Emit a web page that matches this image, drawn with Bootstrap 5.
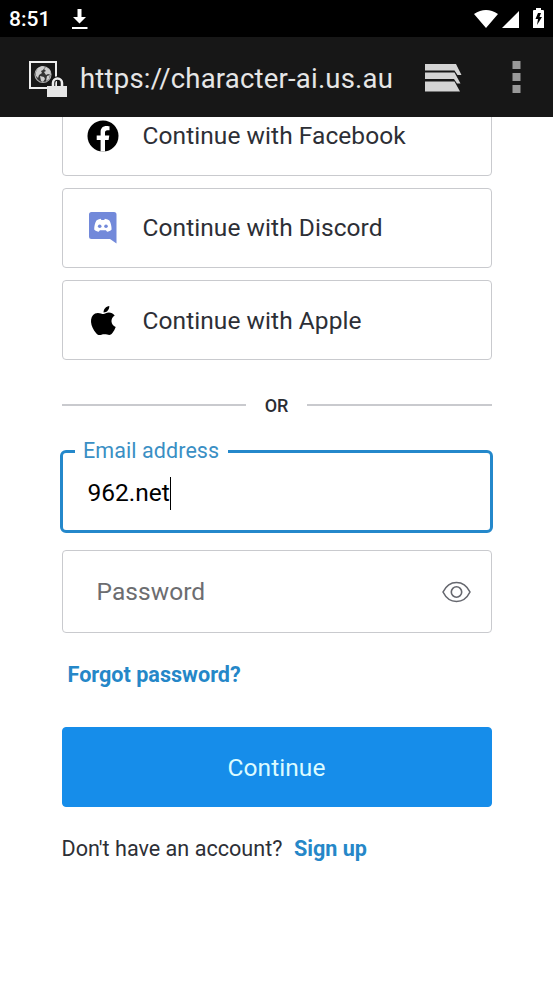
<!DOCTYPE html>
<html lang="en">
<head>
<meta charset="utf-8">
<meta name="viewport" content="width=device-width, initial-scale=1">
<title>Log in</title>
<link href="https://cdn.jsdelivr.net/npm/bootstrap@5.3.0/dist/css/bootstrap.min.css" rel="stylesheet">
<style>
  body { font-family: Roboto, "Liberation Sans", sans-serif; height: 984px; background: #fff; color: #2d2f36; }
  svg { display: block; flex: none; }
  .status-bar { height: 37px; background: #000; color: #fff; padding: 0 8px 0 9px; }
  .clock { font-size: 21px; font-weight: 500; line-height: 37px; width: 61px; padding-top: 2px; }
  .browser-bar { height: 80px; background: #171717; color: #e6e6e6; padding: 0 32px 0 27px; }
  .address { font-size: 27.5px; line-height: 32px; margin-left: 12px; padding-top: 3px; letter-spacing: .2px; }
  .overview { margin-top: 2px; }
  .menu-dots { margin-left: 50px; }
  .login { width: 430px; margin-left: 61.5px; }
  .providers { margin-top: -21.5px; gap: 12.3px; }
  .provider { --bs-btn-border-color: #c9cace; --bs-btn-color: #2d2f36; height: 80px; border-width: 1.5px; border-radius: 4px; padding: 2px 24px 0; font-size: 24.5px; letter-spacing: .06px; }
  .provider svg { margin: -1px 22.5px 0 .5px; }
  .divider { margin-top: 33px; height: 24px; gap: 19px; font-size: 18px; font-weight: 500; color: #2b2d33; }
  .rule { height: 1.5px; background: #c9cace; }
  .field { border: 1.5px solid #c9cace; border-radius: 4px; height: 83px; }
  .field-active { border: 3px solid #2488cb; border-radius: 6px; margin: 33px -1.5px 0; padding: 4px 25px 0 24.5px; font-size: 24.5px; color: #000; }
  .field-label { left: 12px; top: -16px; padding: 0 9px 0 8px; font-size: 21.5px; line-height: 28px; letter-spacing: .08px; color: #3a8fc4; background: #fff; }
  .caret { width: 1px; height: 33px; background: #000; }
  .field-password { margin-top: 17px; padding: 0 20px 0 34px; }
  .field-password input { font-size: 24.5px; letter-spacing: .06px; padding-top: 2px !important; }
  .field-password input::placeholder { color: #6c6d70; opacity: 1; }
  .accent { color: #2587c8; font-weight: 700; text-decoration: none; }
  .forgot { font-size: 21.6px; line-height: 30px; margin: 27px 0 0 6px; }
  .submit { --bs-btn-bg: #168dea; --bs-btn-border-color: #168dea; --bs-btn-color: #dcfbff; height: 80px; margin-top: 37px; border-radius: 4px; padding-top: 8px; font-size: 24.5px; letter-spacing: .06px; }
  .signup { font-size: 21.6px; line-height: 30px; margin-top: 27px; gap: 11.5px; }
</style>
</head>
<body class="overflow-hidden">
<header>
  <div class="status-bar d-flex align-items-center">
    <span class="clock">8:51</span>
    <svg width="18" height="22" viewBox="0 0 18 22" fill="#fff"><path d="M7.500 1h4v8h4.500L9.500 15.500 3 9h4.500zM2 19h15.500v2H2z"/></svg>
    <svg class="ms-auto" width="71" height="22" viewBox="0 0 71 22" fill="#fff"><path d="M0 6Q12 -2 24 6L12 20zM45 3v17H28zM60 2h2V0h5v2h2q1 0 1 1v17H59V3q0-1 1-1z"/><path fill="#000" d="M64 5h3l-1.500 4h2.500l-5 8 1-6h-2.500z"/></svg>
  </div>
  <nav class="browser-bar d-flex align-items-center" aria-label="Browser">
    <svg width="41" height="40" viewBox="27 59 41 40"><path fill="#171717" stroke="#eee" stroke-width="2" d="M30 64h26v26H30z"/><circle cx="43" cy="76.500" r="8" fill="#333" stroke="#aaa" stroke-width="1.200"/><path fill="#ccc" d="M36 74l2-4 4-2 3 1-2 3-2 1 1 2-3 2-1 3-2-2zm10-5l4 3 1 5-3-1-2 1-2-3 2-1-2-2zm-6 9l4 1 1 2-2 3-2-1zm7 0l3-1-1 4-3 2z"/><path fill="none" stroke="#171717" stroke-width="4.500" d="M53 90v-5a4.500 4.500 0 0 1 9 0v5"/><path fill="none" stroke="#eee" stroke-width="2.500" d="M53 90v-5a4.500 4.500 0 0 1 9 0v5"/><path fill="#e6e6e6" d="M47 88h20v11H47z"/></svg>
    <span class="address">https://character-ai.us.au</span>
    <svg class="overview ms-auto" width="37" height="28" viewBox="0 0 37 28" fill="#d4d4d4"><path d="M0 0h31l5.500 11h-4L29.500 6.500H0zM0 8.500h29.500l6 11h-3.500L29 15H0zM0 17.500h29.500l5.500 10H0z"/></svg>
    <svg class="menu-dots" width="9" height="32" viewBox="0 0 9 32" fill="#999"><path d="M.5 0h8v8h-8zM.5 12h8v8h-8zM.5 24h8v8h-8z"/></svg>
  </nav>
</header>
<main class="overflow-hidden">
  <form class="login">
    <div class="providers d-flex flex-column">
      <button type="button" class="provider btn d-flex align-items-center">
        <svg width="33" height="32" viewBox="0 0 33 32"><circle cx="16" cy="16" r="15.500"/><path fill="#fff" d="M13.600 31.500V20H9.700v-4.500h3.900V12c0-3.900 2.300-6 5.900-6 1.700 0 3 .3 3 .3v3.900h-2c-1.900 0-2.500 1.200-2.500 2.400v2.900h4.300l-.7 4.500H18v11.500z"/></svg>
        Continue with Facebook
      </button>
      <button type="button" class="provider btn d-flex align-items-center">
        <svg width="33" height="32" viewBox="0 0 33 32"><path fill="#7289da" d="M4.500 0h22.500q2.500 0 2.500 2.500v29l-6.500-4.500H4.500q-2.500 0-2.500-2.500V2.500q0-2.500 2.500-2.500z"/><path fill="#fff" d="M11.200 7.500l2.500-.7.700 1.200h2.800l.7-1.200 2.700.7 1.800 1c1.500 2.500 2.200 5.500 2.200 9-1.200 1.400-2.800 2-4.500 2.300l-1.200-1.600h-6l-1.200 1.600c-1.700-.3-3.300-.9-4.500-2.300 0-3.500.7-6.500 2.200-9z"/><circle cx="12.700" cy="14.300" r="1.800" fill="#7289da"/><circle cx="19" cy="14.300" r="1.800" fill="#7289da"/></svg>
        Continue with Discord
      </button>
      <button type="button" class="provider btn d-flex align-items-center">
        <svg width="33" height="32" viewBox="0 0 33 32"><path d="M22.300 1c.2 3.600-2.400 6.600-5.700 6.500C16.400 4.300 19 1.300 22.300 1zM16.400 9c1.400 0 3-1.400 5.500-1.400 2.200 0 4.300 1 5.800 3-4.800 3-4 9.400 1 11.300-.8 2.300-1.900 4.300-3.300 6.200-2.600 3.400-4.300 1.200-8 1.200-3.800 0-5.400 2.200-8-.9C3.100 21.800 1.900 11.700 8.100 8.600c3.400-1.700 6.300.4 8.300.4z"/></svg>
        Continue with Apple
      </button>
    </div>

    <div class="divider d-flex align-items-center">
      <span class="rule flex-fill"></span><span>OR</span><span class="rule flex-fill"></span>
    </div>

    <div class="field field-active position-relative d-flex align-items-center">
      <label class="field-label position-absolute">Email address</label>
      <span>962.net</span><span class="caret"></span>
    </div>

    <div class="field field-password d-flex align-items-center">
      <input type="password" class="form-control border-0 p-0 shadow-none" placeholder="Password" aria-label="Password">
      <svg width="29" height="22" viewBox="0 0 29 22" fill="none" stroke="#65676e" stroke-width="1.600"><path d="M1 11C4 5 8.500 1.500 14.500 1.500S25 5 28 11c-3 6-7.500 9.500-13.500 9.500S4 17 1 11z"/><circle cx="14.500" cy="11" r="5.200"/></svg>
    </div>

    <div class="forgot"><a class="accent" href="#">Forgot password?</a></div>
    <button type="button" class="submit btn btn-primary w-100">Continue</button>
    <div class="signup d-flex"><span>Don't have an account?</span><a class="accent" href="#">Sign up</a></div>
  </form>
</main>
<script src="https://cdn.jsdelivr.net/npm/bootstrap@5.3.0/dist/js/bootstrap.bundle.min.js"></script>
</body>
</html>
